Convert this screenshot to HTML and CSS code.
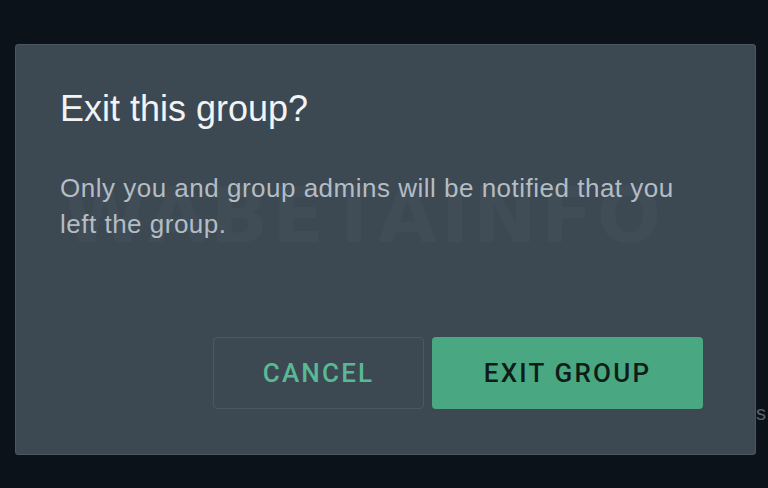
FILE: index.html
```html
<!DOCTYPE html>
<html>
<head>
<meta charset="utf-8">
<link rel="stylesheet" href="styles.css">
</head>
<body>
<div class="screen">
  <div class="dialog">
    <div class="watermark" aria-hidden="true">WABETAINFO</div>
    <h1 class="title">Exit this group?</h1>
    <p class="body">Only you and group admins will be notified that you left the group.</p>
    <div class="actions">
      <button class="btn btn-cancel">CANCEL</button>
      <button class="btn btn-exit">EXIT GROUP</button>
    </div>
  </div>
  <div class="edge-s">s</div>
</div>
</body>
</html>
```
FILE: styles.css
```css
html, body {
  margin: 0;
  padding: 0;
  background: #0b1219;
  width: 768px;
  height: 488px;
  overflow: hidden;
}
.screen {
  position: relative;
  width: 768px;
  height: 488px;
  padding: 44px 12px 0 15px;
  box-sizing: border-box;
  font-family: "Liberation Sans", Arial, sans-serif;
}
.dialog {
  position: relative;
  width: 741px;
  height: 411px;
  box-sizing: border-box;
  background: #3c4852;
  border-radius: 4px;
  box-shadow: 0 0 0 1px #4a5660 inset;
  padding: 44px 45px 0 45px;
  display: flex;
  flex-direction: column;
}
.watermark {
  position: absolute;
  left: 48px;
  top: 134px;
  font-family: "DejaVu Sans", sans-serif;
  font-weight: bold;
  font-size: 76px;
  letter-spacing: 4px;
  color: rgba(255,255,255,0.025);
  line-height: 1;
}
.title {
  position: relative;
  margin: 0;
  font-size: 36px;
  font-weight: normal;
  color: #f1f3f4;
  line-height: 42px;
}
.body {
  position: relative;
  margin: 40px 0 0 0;
  font-size: 26px;
  letter-spacing: 0.5px;
  line-height: 36px;
  color: #b3bdc4;
  width: 640px;
}
.actions {
  margin-top: 95px;
  display: flex;
  justify-content: flex-end;
  gap: 8px;
  padding-right: 8px;
}
.btn {
  height: 72px;
  border-radius: 4px;
  font-family: "Roboto", "Liberation Sans", sans-serif;
  font-size: 26px;
  letter-spacing: 2.2px;
  font-weight: 500;
  cursor: pointer;
}
.btn-cancel {
  width: 211px;
  background: transparent;
  border: 1px solid #4c5862;
  color: #59b994;
}
.btn-exit {
  width: 271px;
  background: #49a882;
  border: none;
  color: #0f1c17;
}
.edge-s {
  position: absolute;
  left: 756px;
  top: 402px;
  font-size: 20px;
  color: #5a636b;
}
```
